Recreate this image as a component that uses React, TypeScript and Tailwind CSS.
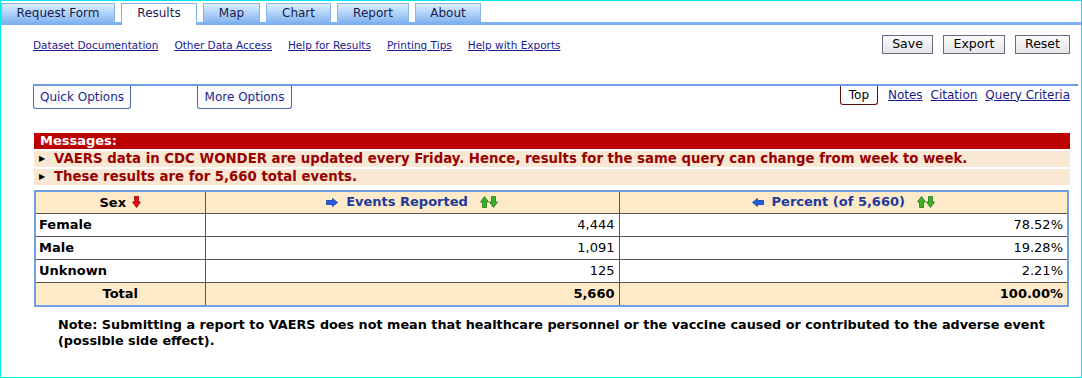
import React from 'react'

const tabs = [
  { label: 'Request Form', w: 'w-[114px]' },
  { label: 'Results', w: 'w-[76px]', active: true },
  { label: 'Map', w: 'w-[57px]' },
  { label: 'Chart', w: 'w-[65px]' },
  { label: 'Report', w: 'w-[72px]' },
  { label: 'About', w: 'w-[66px]' },
]

const topLinks = ['Dataset Documentation', 'Other Data Access', 'Help for Results', 'Printing Tips', 'Help with Exports']

const buttons = [
  { label: 'Save', w: 'w-[51px]' },
  { label: 'Export', w: 'w-[62px]' },
  { label: 'Reset', w: 'w-[55px]' },
]

const rows = [
  { sex: 'Female', n: '4,444', pct: '78.52%' },
  { sex: 'Male', n: '1,091', pct: '19.28%' },
  { sex: 'Unknown', n: '125', pct: '2.21%' },
]

function DownArrow({ color, stroke }: { color: string; stroke: string }) {
  return (
    <svg width="9" height="12" viewBox="0 0 9 12" className="inline-block">
      <polygon points="2.5,0.5 6.5,0.5 6.5,6 8.5,6 4.5,11.5 0.5,6 2.5,6" fill={color} stroke={stroke} strokeWidth="0.8" />
    </svg>
  )
}

function UpArrow({ color, stroke }: { color: string; stroke: string }) {
  return (
    <svg width="9" height="12" viewBox="0 0 9 12" className="inline-block">
      <polygon points="2.5,11.5 6.5,11.5 6.5,6 8.5,6 4.5,0.5 0.5,6 2.5,6" fill={color} stroke={stroke} strokeWidth="0.8" />
    </svg>
  )
}

function SideArrow({ left }: { left?: boolean }) {
  return (
    <svg width="12" height="9" viewBox="0 0 12 9" className={left ? 'inline-block -scale-x-100' : 'inline-block'}>
      <polygon points="0.5,2.5 6.5,2.5 6.5,0.5 11.5,4.5 6.5,8.5 6.5,6.5 0.5,6.5" fill="#1f5fe0" stroke="#1238a8" strokeWidth="0.8" />
    </svg>
  )
}

function SortArrows() {
  return (
    <span className="inline-flex items-center ml-[4px]">
      <UpArrow color="#3cb02a" stroke="#1d7a12" />
      <DownArrow color="#3cb02a" stroke="#1d7a12" />
    </span>
  )
}

export default function App() {
  return (
    <div className="w-[1082px] h-[378px] border-[1.5px] border-[#00e8e8] bg-white font-['DejaVu_Sans',sans-serif] overflow-hidden">
      {/* tabs */}
      <div className="pt-[1.5px]">
        <div className="flex gap-[6px] items-start h-[19px]">
          {tabs.map((t) => (
            <div
              key={t.label}
              className={
                t.active
                  ? `${t.w} h-[22px] shrink-0 relative z-10 bg-white border border-b-0 border-[#7faee8] flex items-center justify-center text-[12px] text-[#1a1a50] pb-[3px]`
                  : `${t.w} h-[19px] shrink-0 bg-gradient-to-b from-[#dcefff] to-[#86b6f0] border border-b-0 border-[#8cb6ea] flex items-center justify-center text-[12px] text-[#1a1a50]`
              }
            >
              {t.label}
            </div>
          ))}
        </div>
        <div className="h-[3px] bg-[#7fb2f2]" />
      </div>

      <div className="pl-[32px] pr-[11px]">
        {/* link row + buttons */}
        <div className="flex items-center justify-between mt-[10px]">
          <div className="flex gap-[16px] text-[10.5px] text-[#1a1a8c] mt-[3px]">
            {topLinks.map((l) => (
              <a key={l} href="#" className="underline">{l}</a>
            ))}
          </div>
          <div className="flex gap-[10px]">
            {buttons.map((b) => (
              <button key={b.label} className={`${b.w} h-[19px] border border-[#6a6a80] bg-gradient-to-b from-[#fafafa] to-[#e6e6e6] text-[12.5px] text-black leading-none`}>
                {b.label}
              </button>
            ))}
          </div>
        </div>

        {/* options row */}
        <div className="mt-[30px] border-t-2 border-[#6e9ce0] -mr-[8px] pr-[8px] flex justify-between items-start">
          <div className="flex gap-[66px]">
            <button className="w-[98px] h-[23px] border border-t-0 border-[#4d6cb0] rounded-b-[3px] bg-[#fbfbff] text-[12px] text-[#1a2a8a]">
              Quick Options
            </button>
            <button className="w-[95px] h-[23px] border border-t-0 border-[#4d6cb0] rounded-b-[3px] bg-[#fbfbff] text-[12px] text-[#1a2a8a]">
              More Options
            </button>
          </div>
          <div className="flex items-start gap-[10px]">
            <span className="w-[38px] h-[19px] border border-t-0 border-[#5a1010] rounded-b-[3px] flex items-center justify-center text-[12px] text-black">
              Top
            </span>
            <div className="flex gap-[8px] text-[12px] text-[#1a1a8c]">
              <a href="#" className="underline">Notes</a>
              <a href="#" className="underline">Citation</a>
              <a href="#" className="underline">Query Criteria</a>
            </div>
          </div>
        </div>

        {/* messages */}
        <div className="mt-[24px] w-[1036px] ml-[1px] text-[13px] font-bold">
          <div className="h-[16px] bg-[#bb0000] text-white leading-[16px] pl-[6px]">Messages:</div>
          <div className="mt-[2px] h-[16px] bg-[#f8e7d3] flex items-center text-[#990000] text-[13.3px]">
            <span className="text-black text-[8px] w-[20px] pl-[5px]">▶</span>
            VAERS data in CDC WONDER are updated every Friday. Hence, results for the same query can change from week to week.
          </div>
          <div className="mt-[2px] h-[16px] bg-[#f8e7d3] flex items-center text-[#990000] text-[13.3px]">
            <span className="text-black text-[8px] w-[20px] pl-[5px]">▶</span>
            These results are for 5,660 total events.
          </div>
        </div>

        {/* table */}
        <table className="mt-[5px] ml-[1px] w-[1035px] border-collapse border-2 border-[#6e9fe2] text-[13px]">
          <thead>
            <tr className="h-[23px] bg-[#fee9c9]">
              <th className="w-[170px] border border-[#555] border-t-0 border-l-0 font-bold text-black">
                <span className="inline-flex items-center gap-[6px]">Sex <DownArrow color="#e01010" stroke="#a00000" /></span>
              </th>
              <th className="w-[414px] border border-[#555] border-t-0 font-bold text-[#1c3a9a]">
                <span className="inline-flex items-center gap-[8px]"><SideArrow /> Events Reported<SortArrows /></span>
              </th>
              <th className="border border-[#555] border-t-0 border-r-0 font-bold text-[#1c3a9a]">
                <span className="inline-flex items-center gap-[8px]"><SideArrow left /> Percent (of 5,660)<SortArrows /></span>
              </th>
            </tr>
          </thead>
          <tbody>
            {rows.map((r) => (
              <tr key={r.sex} className="h-[23px] bg-white">
                <td className="border border-[#555] border-l-0 font-bold text-black pl-[3px]">{r.sex}</td>
                <td className="border border-[#555] text-right pr-[4px] text-black">{r.n}</td>
                <td className="border border-[#555] border-r-0 text-right pr-[4px] text-black">{r.pct}</td>
              </tr>
            ))}
            <tr className="h-[23px] bg-[#fee9c9] font-bold text-black">
              <td className="border border-[#555] border-l-0 border-b-0 text-center">Total</td>
              <td className="border border-[#555] border-b-0 text-right pr-[4px]">5,660</td>
              <td className="border border-[#555] border-r-0 border-b-0 text-right pr-[4px]">100.00%</td>
            </tr>
          </tbody>
        </table>

        {/* note */}
        <p className="mt-[10px] ml-[25px] w-[1000px] text-[12.8px] font-bold text-black leading-[16px]">
          Note: Submitting a report to VAERS does not mean that healthcare personnel or the vaccine caused or contributed to the adverse event (possible side effect).
        </p>
      </div>
    </div>
  )
}
